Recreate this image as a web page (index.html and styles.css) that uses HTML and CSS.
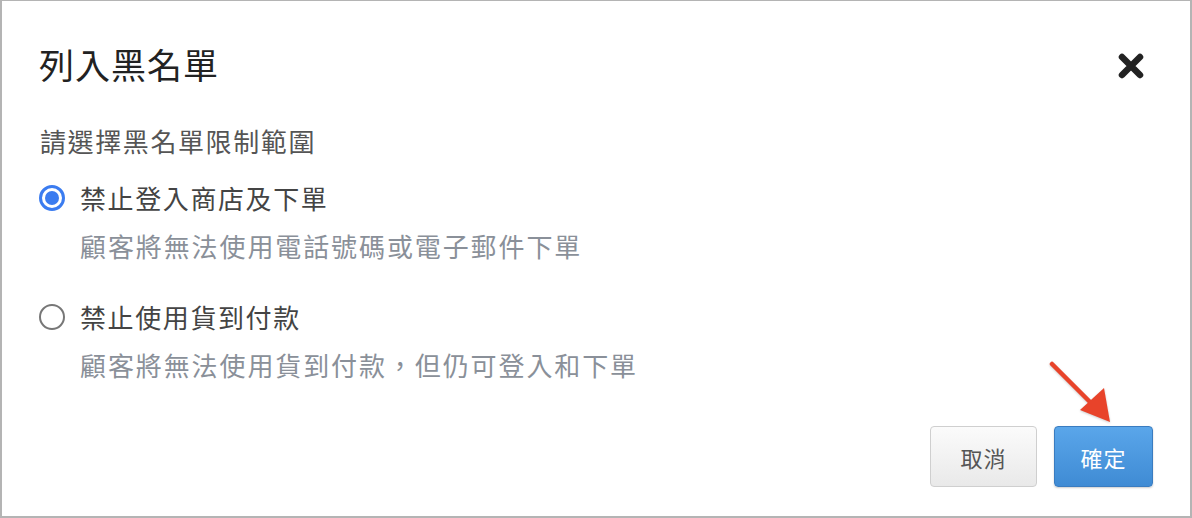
FILE: index.html
```html
<!DOCTYPE html>
<html lang="zh-Hant">
<head>
<meta charset="utf-8">
<title>列入黑名單</title>
<link rel="stylesheet" href="styles.css">
</head>
<body>
<div class="dialog">
  <div class="header">
    <h1 class="title">列入黑名單</h1>
    <button class="close" aria-label="close">
      <svg width="26" height="26" viewBox="0 0 26 26"><path d="M4 4 L22 22 M22 4 L4 22" stroke="#222" stroke-width="6.5" stroke-linecap="round"/></svg>
    </button>
  </div>
  <div class="body">
    <p class="prompt">請選擇黑名單限制範圍</p>
    <div class="option">
      <div class="option-row"><span class="radio checked"></span><span class="label">禁止登入商店及下單</span></div>
      <p class="desc">顧客將無法使用電話號碼或電子郵件下單</p>
    </div>
    <div class="option second">
      <div class="option-row"><span class="radio"></span><span class="label">禁止使用貨到付款</span></div>
      <p class="desc">顧客將無法使用貨到付款，但仍可登入和下單</p>
    </div>
  </div>
  <div class="footer">
    <button class="btn cancel">取消</button>
    <button class="btn confirm">確定</button>
  </div>
  <svg class="arrow" width="70" height="70" viewBox="0 0 70 70">
    <path d="M4 4 L44 44" stroke="#e8432a" stroke-width="4.5" stroke-linecap="round"/>
    <path d="M32 50 L56 28 L62 62 Z" fill="#e8432a"/>
  </svg>
</div>
</body>
</html>
```

FILE: styles.css
```css
* { box-sizing: border-box; }
html, body { margin: 0; padding: 0; background: #fff; }
body {
  font-family: "Noto Sans CJK TC", "Noto Sans", sans-serif;
  width: 1192px;
  height: 518px;
}
.dialog {
  position: relative;
  width: 1192px;
  height: 518px;
  border-top: 1px solid #b4b4b4;
  border-left: 2px solid #b4b4b4;
  border-right: 2px solid #b4b4b4;
  border-bottom: 2px solid #b4b4b4;
  display: flex;
  flex-direction: column;
  background: #fff;
}
.header {
  display: flex;
  align-items: center;
  justify-content: space-between;
  padding: 41px 46px 0 37px;
  height: 85px;
}
.title {
  margin: 0;
  font-size: 35px;
  font-weight: 400;
  line-height: 44px;
  color: #222;
  letter-spacing: 1px;
}
.close {
  border: 0;
  background: none;
  padding: 0;
  width: 26px;
  height: 26px;
  margin-top: 4px;
  display: flex;
}
.body {
  padding: 37px 0 0 38px;
}
.prompt {
  margin: 0;
  font-size: 26px;
  line-height: 36px;
  color: #555;
  letter-spacing: 1.6px;
}
.option { margin-top: 21px; }
.option.second { margin-top: 35px; }
.option-row {
  display: flex;
  align-items: center;
  height: 36px;
}
.radio {
  width: 26px;
  height: 26px;
  border-radius: 50%;
  border: 2px solid #777;
  margin-left: -1px;
  margin-right: 15px;
  flex: none;
  display: flex;
  align-items: center;
  justify-content: center;
}
.radio.checked {
  border: 3px solid #3b7cf0;
}
.radio.checked::after {
  content: "";
  width: 14px;
  height: 14px;
  border-radius: 50%;
  background: #3b7cf0;
}
.label {
  font-size: 26px;
  line-height: 36px;
  color: #444;
  letter-spacing: 1.6px;
}
.desc {
  margin: 12px 0 0 40px;
  font-size: 26px;
  line-height: 36px;
  color: #8a9099;
  letter-spacing: 1.9px;
}
.footer {
  margin-top: auto;
  display: flex;
  justify-content: flex-end;
  gap: 17px;
  padding: 0 37px 29px 0;
}
.btn {
  height: 61px;
  border-radius: 4px;
  font-family: "Noto Sans CJK TC", "Noto Sans", sans-serif;
  font-size: 22px;
  letter-spacing: 1px;
  cursor: pointer;
}
.cancel {
  width: 107px;
  background: linear-gradient(#fbfbfb, #e9e9e9);
  border: 1px solid #cfcfcf;
  color: #555;
}
.confirm {
  width: 99px;
  background: linear-gradient(#5aa6ea, #3f8bd4);
  border: 1px solid #3a7cc0;
  color: #fff;
  box-shadow: 0 1px 2px rgba(0,0,0,0.2);
}
.arrow {
  position: absolute;
  left: 1046px;
  top: 359px;
  filter: drop-shadow(0 1px 1px rgba(0,0,0,0.2));
}
```
